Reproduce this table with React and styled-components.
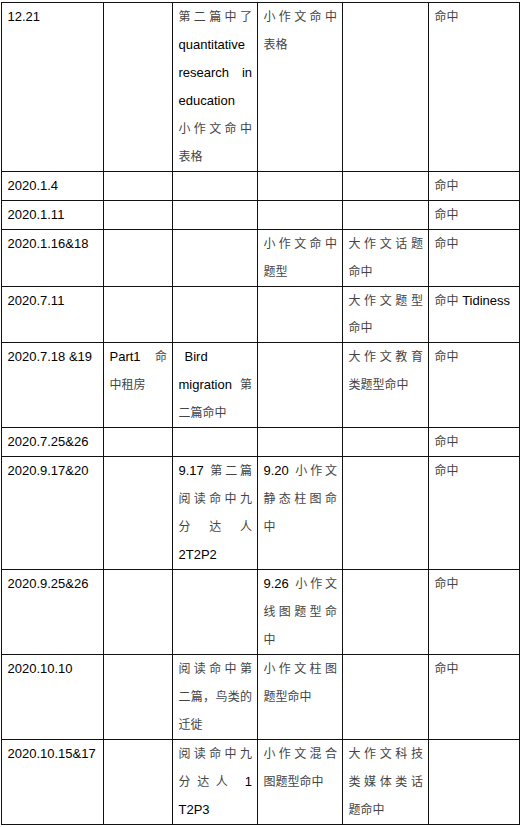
import React from "react";
import styled, { createGlobalStyle } from "styled-components";

const GlobalStyle = createGlobalStyle`
  html, body {
    margin: 0;
    padding: 0;
    background: #ffffff;
  }
  body {
    font-family: "Liberation Sans", Arial, "Noto Sans CJK SC", sans-serif;
    color: #000000;
  }
`;

const HAN = /([\u2E80-\u9FFF\u3000-\u303F\uFF00-\uFFEF]+)/;

const widths = [102, 69, 85, 85, 86, 91];

// each cell: list of printed lines, all but the last are justified
const rows = [
  [["12.21"], [], ["第二篇中了", "quantitative", "research in", "education", "小作文命中", "表格"], ["小作文命中", "表格"], [], ["命中"]],
  [["2020.1.4"], [], [], [], [], ["命中"]],
  [["2020.1.11"], [], [], [], [], ["命中"]],
  [["2020.1.16&18"], [], [], ["小作文命中", "题型"], ["大作文话题", "命中"], ["命中"]],
  [["2020.7.11"], [], [], [], ["大作文题型", "命中"], ["命中 Tidiness"]],
  [["2020.7.18 &19"], ["Part1 命", "中租房"], [" Bird", "migration 第", "二篇命中"], [], ["大作文教育", "类题型命中"], ["命中"]],
  [["2020.7.25&26"], [], [], [], [], ["命中"]],
  [["2020.9.17&20"], [], ["9.17 第二篇", "阅读命中九", "分达人", "2T2P2"], ["9.20 小作文", "静态柱图命", "中"], [], ["命中"]],
  [["2020.9.25&26"], [], [], ["9.26 小作文", "线图题型命", "中"], [], ["命中"]],
  [["2020.10.10"], [], ["阅读命中第", "二篇，鸟类的", "迁徙"], ["小作文柱图", "题型命中"], [], ["命中"]],
  [["2020.10.15&17"], [], ["阅读命中九", "分达人 1", "T2P3"], ["小作文混合", "图题型命中"], ["大作文科技", "类媒体类话", "题命中"], []],
];

const renderText = (text) =>
  text.trim().split(HAN).map((part, i) => (i % 2 ? <Han key={i}>{part}</Han> : part));

export default function App() {
  return (
    <>
      <GlobalStyle />
      <Table>
        <colgroup>
          {widths.map((w, i) => (
            <col key={i} style={{ width: w }} />
          ))}
        </colgroup>
        <tbody>
          {rows.map((row, r) => (
            <tr key={r}>
              {row.map((lines, c) => (
                <Cell key={c}>
                  {lines.map((line, l) => (
                    <Line key={l} $justify={l < lines.length - 1} $indent={line.startsWith(" ")}>
                      {renderText(line)}
                    </Line>
                  ))}
                </Cell>
              ))}
            </tr>
          ))}
        </tbody>
      </Table>
    </>
  );
}

const Table = styled.table`
  border-collapse: collapse;
  table-layout: fixed;
  width: 519px;
  margin: 2px 0 0 1px;
`;

const Cell = styled.td`
  border: 1px solid #111111;
  padding: 0 5px 0 5.5px;
  vertical-align: top;
  height: 27.95px;
`;

const Line = styled.div`
  font-size: 13px;
  line-height: 27.95px;
  color: #000000;
  text-align: left;
  text-align-last: ${(p) => (p.$justify ? "justify" : "left")};
  text-indent: ${(p) => (p.$indent ? "6px" : "0")};
`;

const Han = styled.span`
  font-family: "Noto Sans CJK SC", sans-serif;
  font-size: 12px;
  line-height: 1;
  color: #444444;
`;
